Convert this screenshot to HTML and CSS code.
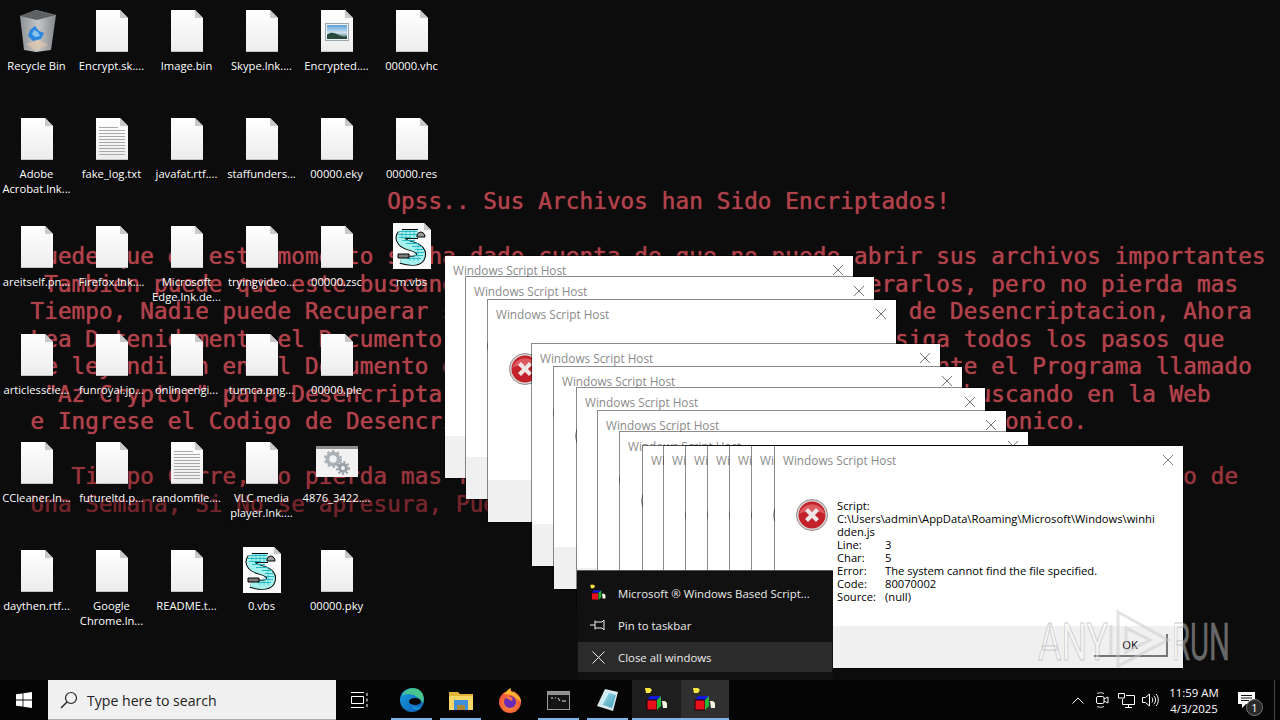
FILE: index.html
```html
<!DOCTYPE html>
<html lang="es">
<head>
  <meta charset="UTF-8" />
  <title>Desktop</title>
  <link rel="stylesheet" href="styles.css">
</head>
<body>
  <svg class="defs" width="0" height="0">
    <defs>
      <linearGradient id="paper" x1="0" y1="0" x2="0" y2="1"><stop offset="0" stop-color="#ffffff"/><stop offset="1" stop-color="#ececec"/></linearGradient>
      <linearGradient id="binfill" x1="0" y1="0" x2="1" y2="0"><stop offset="0" stop-color="#8d9296"/><stop offset=".5" stop-color="#c4c6c8"/><stop offset="1" stop-color="#84878a"/></linearGradient>
      <linearGradient id="sky" x1="0" y1="0" x2="0" y2="1"><stop offset="0" stop-color="#5aa0d8"/><stop offset=".55" stop-color="#cfe2ee"/><stop offset="1" stop-color="#2c5c50"/></linearGradient>
      <linearGradient id="edgefill" x1="0" y1="0" x2="1" y2="1"><stop offset="0" stop-color="#1b9de2"/><stop offset="1" stop-color="#0b5fb4"/></linearGradient>
      <linearGradient id="padfill" x1="0" y1="0" x2="1" y2="1"><stop offset="0" stop-color="#a8e0ee"/><stop offset="1" stop-color="#3f9db8"/></linearGradient>
      <radialGradient id="foxfill" cx=".5" cy=".6" r=".6"><stop offset="0" stop-color="#ff9a2e"/><stop offset="1" stop-color="#f0483e"/></radialGradient>
      <symbol id="doc" viewBox="0 0 32 42">
        <path d="M0 0H24L32 8V42H0Z" fill="url(#paper)"/>
        <path d="M24 0V8H32Z" fill="#c9c9c9"/>
        <path d="M0 41.5H32" stroke="#c4c4c4"/>
      </symbol>
      <symbol id="txt" viewBox="0 0 32 42">
        <use href="#doc" width="32" height="42"/>
        <path d="M3 9.5H22M3 12.5H29M3 15.5H29M3 18.5H29M3 21.5H29M3 24.5H29M3 27.5H29M3 30.5H29M3 33.5H29M3 36.5H29" stroke="#a9a9a9"/>
      </symbol>
      <symbol id="picdoc" viewBox="0 0 32 42">
        <use href="#doc" width="32" height="42"/>
        <rect x="4.5" y="13.5" width="23" height="17" fill="#eef1f3" stroke="#9aa6ad"/>
        <rect x="6" y="15" width="20" height="14" fill="url(#sky)"/>
        <path d="M6 25C10 21 14 23 18 25S24 27 26 26V29H6Z" fill="#27493f"/>
      </symbol>
      <symbol id="vbs" viewBox="0 0 38 46">
        <path d="M0 0H31L38 7V46H0Z" fill="#fbfbfb"/>
        <path d="M31 0V7H38Z" fill="#c8c8c8"/>
        <path d="M9 11H25M9 11C5 17 10 21 18 23C26 25 30 29 27 35C24 39 15 38 8 36" fill="none" stroke="#000" stroke-width="10"/>
        <path d="M9 11H25M9 11C5 17 10 21 18 23C26 25 30 29 27 35C24 39 15 38 8 36" fill="none" stroke="#a6f0ee" stroke-width="8"/>
        <path d="M6 8.5H24M5 11.5H24M6 14.5H18M9 17.5H22M13 20.5H26M19 23.5H29M22 26.5H31M23 29.5H31M22 32.5H30M14 35.5H28" stroke="#19b4bc" stroke-width=".9"/>
        <path d="M9 7V15M13 7V17M17 7V19M21 7V21M25 20V38M21 30V38M17 33V38" stroke="#19b4bc" stroke-width=".6"/>
        <path d="M24 12C26 7 32 9 32 14H24Z" fill="#9b9b9b" stroke="#000"/>
        <path d="M5 31H16V35H5Z" fill="#7d7d7d" stroke="#000"/>
      </symbol>
      <symbol id="err" viewBox="0 0 32 32">
        <circle cx="16" cy="16" r="15.5" fill="#d8d8d8" stroke="#9c8a8a"/>
        <circle cx="16" cy="16" r="13.5" fill="#c4222a"/>
        <path d="M3 15A13.5 13.5 0 0 1 29 15C22 11 10 11 3 15Z" fill="#dd5a5f"/>
        <path d="M10.5 10.5L21.5 21.5M21.5 10.5L10.5 21.5" stroke="#efe6e6" stroke-width="4.2"/>
      </symbol>
      <symbol id="x" viewBox="0 0 12 12">
        <path d="M1 1L11 11M11 1L1 11" stroke="#777" fill="none"/>
      </symbol>
      <symbol id="wsh" viewBox="0 0 24 26">
        <path d="M0 1H5L7 3L5 6H1Z" fill="#ffe83a"/>
        <path d="M2 13L5 9H16L12 13Z" fill="#1418d8"/>
        <rect x="2" y="13" width="10" height="10" fill="#e8101c" stroke="#200"/>
        <path d="M12 13L16 9V19L12 23Z" fill="#22b838"/>
        <path d="M17 14H20L22 16V21H18Z" fill="#f4f4e4"/>
      </symbol>
    </defs>
  </svg>

  <pre class="wallpaper"><span class="bright">                            Opss.. Sus Archivos han Sido Encriptados!

  Puede que en este momento se ha dado cuenta de que no puede abrir sus archivos importantes
   Tambien puede que este buscando la mejor forma de como Recuperarlos, pero no pierda mas
  Tiempo, Nadie puede Recuperar sus Archivos sin nuestro Servicio de Desencriptacion, Ahora
  Lea Detenidamente el Documento que le Dejamos en su Escritorio siga todos los pasos que
   e leyendiron en el Documento de Rescate, y Luego Baje Inmediatamente el Programa llamado
   "Az Cryptor" para Desencriptar sus Archivos, Tambien Puede Hacerlo buscando en la Web
  e Ingrese el Codigo de Desencriptacion que le Daremos por Correo Electronico.
</span><span class="mid">
     Tiempo Corre, No pierda mas Tiempo, Su Codigo de Desencriptacion Vence en el Plazo de
</span><span class="dim">  Una Semana, Si No se apresura, Puede Perder Todos sus Archivos</span></pre>

  <main class="icons">
    <div class="item">
      <svg class="thumb" width="38" height="42" viewBox="0 0 38 42">
        <path d="M2 6L18 0L38 5L33 40L18 42L6 40Z" fill="url(#binfill)"/>
        <path d="M2 6L18 0L38 5L19 10Z" fill="#5e6164"/>
        <path d="M12 20L17 16L21 21L26 23L23 29L15 31L10 26Z" fill="#2a86de"/>
        <path d="M16 20L20 22L22 26L17 27L14 24Z" fill="#8cc4f0"/>
        <path d="M8 34L20 30L30 35L18 41Z" fill="#e8c8a8" opacity=".6"/>
      </svg>
      <span>Recycle Bin</span>
    </div>
    <div class="item"><svg class="thumb doc"><use href="#doc"/></svg><span>Encrypt.sk....</span></div>
    <div class="item"><svg class="thumb doc"><use href="#doc"/></svg><span>Image.bin</span></div>
    <div class="item"><svg class="thumb doc"><use href="#doc"/></svg><span>Skype.lnk....</span></div>
    <div class="item"><svg class="thumb doc"><use href="#picdoc"/></svg><span>Encrypted....</span></div>
    <div class="item"><svg class="thumb doc"><use href="#doc"/></svg><span>00000.vhc</span></div>

    <div class="item"><svg class="thumb doc"><use href="#doc"/></svg><span>Adobe<br>Acrobat.lnk...</span></div>
    <div class="item"><svg class="thumb doc"><use href="#txt"/></svg><span>fake_log.txt</span></div>
    <div class="item"><svg class="thumb doc"><use href="#doc"/></svg><span>javafat.rtf....</span></div>
    <div class="item"><svg class="thumb doc"><use href="#doc"/></svg><span>staffunders...</span></div>
    <div class="item"><svg class="thumb doc"><use href="#doc"/></svg><span>00000.eky</span></div>
    <div class="item"><svg class="thumb doc"><use href="#doc"/></svg><span>00000.res</span></div>

    <div class="item"><svg class="thumb doc"><use href="#doc"/></svg><span>areitself.pn...</span></div>
    <div class="item"><svg class="thumb doc"><use href="#doc"/></svg><span>Firefox.lnk....</span></div>
    <div class="item"><svg class="thumb doc"><use href="#doc"/></svg><span>Microsoft<br>Edge.lnk.de...</span></div>
    <div class="item"><svg class="thumb doc"><use href="#doc"/></svg><span>tryingvideo...</span></div>
    <div class="item"><svg class="thumb doc"><use href="#doc"/></svg><span>00000.zsc</span></div>
    <div class="item"><svg class="thumb script"><use href="#vbs"/></svg><span>m.vbs</span></div>

    <div class="item"><svg class="thumb doc"><use href="#doc"/></svg><span>articlesscie...</span></div>
    <div class="item"><svg class="thumb doc"><use href="#doc"/></svg><span>funroyal.jp...</span></div>
    <div class="item"><svg class="thumb doc"><use href="#doc"/></svg><span>onlineengi...</span></div>
    <div class="item"><svg class="thumb doc"><use href="#doc"/></svg><span>turnca.png...</span></div>
    <div class="item"><svg class="thumb doc"><use href="#doc"/></svg><span>00000.ple</span></div>
    <div class="item"></div>

    <div class="item"><svg class="thumb doc"><use href="#doc"/></svg><span>CCleaner.ln...</span></div>
    <div class="item"><svg class="thumb doc"><use href="#doc"/></svg><span>futureltd.p...</span></div>
    <div class="item"><svg class="thumb doc"><use href="#txt"/></svg><span>randomfile....</span></div>
    <div class="item"><svg class="thumb doc"><use href="#doc"/></svg><span>VLC media<br>player.lnk....</span></div>
    <div class="item">
      <svg class="thumb gears" width="42" height="31" viewBox="0 0 42 31">
        <rect width="42" height="31" fill="#f2f2f2"/>
        <rect width="42" height="3" fill="#8d8d8d"/>
        <circle cx="17" cy="13" r="5.5" fill="none" stroke="#a9b0b6" stroke-width="3.5"/>
        <circle cx="17" cy="13" r="8" fill="none" stroke="#a9b0b6" stroke-width="2" stroke-dasharray="2.6 2.6"/>
        <circle cx="27" cy="22" r="3.5" fill="none" stroke="#98a0a6" stroke-width="3"/>
        <circle cx="27" cy="22" r="6" fill="none" stroke="#98a0a6" stroke-width="2" stroke-dasharray="2 2"/>
      </svg>
      <span>4876_3422....</span>
    </div>
    <div class="item"></div>

    <div class="item"><svg class="thumb doc"><use href="#doc"/></svg><span>daythen.rtf...</span></div>
    <div class="item"><svg class="thumb doc"><use href="#doc"/></svg><span>Google<br>Chrome.ln...</span></div>
    <div class="item"><svg class="thumb doc"><use href="#doc"/></svg><span>README.t...</span></div>
    <div class="item"><svg class="thumb script"><use href="#vbs"/></svg><span>0.vbs</span></div>
    <div class="item"><svg class="thumb doc"><use href="#doc"/></svg><span>00000.pky</span></div>
  </main>

  <section class="dialog w1"><div class="title">Windows Script Host<svg class="close"><use href="#x"/></svg></div><div class="body"><svg class="erricon"><use href="#err"/></svg></div><div class="foot"></div></section>
  <section class="dialog w2"><div class="title">Windows Script Host<svg class="close"><use href="#x"/></svg></div><div class="body"><svg class="erricon"><use href="#err"/></svg></div><div class="foot"></div></section>
  <section class="dialog w3"><div class="title">Windows Script Host<svg class="close"><use href="#x"/></svg></div><div class="body"><svg class="erricon"><use href="#err"/></svg></div><div class="foot"></div></section>
  <section class="dialog w4"><div class="title">Windows Script Host<svg class="close"><use href="#x"/></svg></div><div class="body"><svg class="erricon"><use href="#err"/></svg></div><div class="foot"></div></section>
  <section class="dialog w5"><div class="title">Windows Script Host<svg class="close"><use href="#x"/></svg></div><div class="body"><svg class="erricon"><use href="#err"/></svg></div><div class="foot"></div></section>
  <section class="dialog w6"><div class="title">Windows Script Host<svg class="close"><use href="#x"/></svg></div><div class="body"><svg class="erricon"><use href="#err"/></svg></div><div class="foot"></div></section>
  <section class="dialog w7"><div class="title">Windows Script Host<svg class="close"><use href="#x"/></svg></div><div class="body"><svg class="erricon"><use href="#err"/></svg></div><div class="foot"></div></section>
  <section class="dialog w8"><div class="title">Windows Script Host<svg class="close"><use href="#x"/></svg></div><div class="body"><svg class="erricon"><use href="#err"/></svg></div><div class="foot"></div></section>
  <section class="dialog w9"><div class="title">Windows Script Host</div><div class="body"><svg class="erricon"><use href="#err"/></svg></div><div class="foot"></div></section>
  <section class="dialog w10"><div class="title">Windows Script Host</div><div class="body"><svg class="erricon"><use href="#err"/></svg></div><div class="foot"></div></section>
  <section class="dialog w11"><div class="title">Windows Script Host</div><div class="body"><svg class="erricon"><use href="#err"/></svg></div><div class="foot"></div></section>
  <section class="dialog w12"><div class="title">Windows Script Host</div><div class="body"><svg class="erricon"><use href="#err"/></svg></div><div class="foot"></div></section>
  <section class="dialog w13"><div class="title">Windows Script Host</div><div class="body"><svg class="erricon"><use href="#err"/></svg></div><div class="foot"></div></section>
  <section class="dialog w14"><div class="title">Windows Script Host</div><div class="body"><svg class="erricon"><use href="#err"/></svg></div><div class="foot"></div></section>

  <section class="dialog main-dialog">
    <div class="title">Windows Script Host<svg class="close"><use href="#x"/></svg></div>
    <div class="body">
      <svg class="erricon"><use href="#err"/></svg>
      <div class="message">
        <div class="wide">Script:</div>
        <div class="wide">C:\Users\admin\AppData\Roaming\Microsoft\Windows\winhi<br>dden.js</div>
        <div>Line:</div><div>3</div>
        <div>Char:</div><div>5</div>
        <div>Error:</div><div>The system cannot find the file specified.</div>
        <div>Code:</div><div>80070002</div>
        <div>Source:</div><div>(null)</div>
      </div>
    </div>
    <div class="foot"><button class="ok">OK</button></div>
  </section>

  <nav class="jumplist">
    <div class="jump"><svg class="jump-icon" width="16" height="18" viewBox="0 0 24 26"><use href="#wsh" width="24" height="26"/></svg>Microsoft ® Windows Based Script...</div>
    <div class="jump"><svg class="jump-icon" width="17" height="12" viewBox="0 0 17 12"><path d="M0 6H5M5 1.5V10.5M5 3H12L14 1V11L12 9H5" fill="none" stroke="#eee"/></svg>Pin to taskbar</div>
    <div class="jump hover"><svg class="jump-icon" width="13" height="13" viewBox="0 0 13 13"><path d="M.5 .5L12.5 12.5M12.5 .5L.5 12.5" stroke="#eee" fill="none"/></svg>Close all windows</div>
  </nav>

  <svg class="watermark" width="210" height="64" viewBox="0 0 210 64">
    <text x="0" y="52" class="wm" textLength="70" lengthAdjust="spacingAndGlyphs">ANY</text>
    <path d="M73 17V47M80 4V58L130 32Z M88 20V44L112 32Z" class="wm-play"/>
    <text x="134" y="52" class="wm" textLength="58" lengthAdjust="spacingAndGlyphs">RUN</text>
  </svg>

  <footer class="taskbar">
    <div class="start">
      <svg width="16" height="16" viewBox="0 0 16 16"><path d="M0 2.3L6.6 1.4V7.6H0ZM7.4 1.3L16 0V7.6H7.4ZM0 8.4H6.6V14.6L0 13.7ZM7.4 8.4H16V16L7.4 14.7Z" fill="#fff"/></svg>
    </div>
    <div class="search">
      <svg width="18" height="18" viewBox="0 0 18 18"><circle cx="11" cy="7" r="5.5" fill="none" stroke="#222" stroke-width="1.2"/><path d="M7 11L1 17" stroke="#222" stroke-width="1.4"/></svg>
      <span>Type here to search</span>
    </div>
    <div class="task wide-task">
      <svg width="18" height="16" viewBox="0 0 18 16"><path d="M0 .5H13M0 15.5H13M.5 4.5H12.5V11.5H.5ZM16 1V4M16 6.5V9.5M16 12V15" stroke="#fff" fill="none"/></svg>
    </div>
    <div class="task open">
      <svg width="24" height="24" viewBox="0 0 24 24">
        <circle cx="12" cy="12" r="12" fill="url(#edgefill)"/>
        <path d="M2 8C4 1 12-1 18 1C23 4 25 10 23 15C20 10 14 6 8 6C5 6 3 7 2 8Z" fill="#47c58f"/>
        <ellipse cx="15" cy="13.5" rx="6" ry="3.6" fill="#050505"/>
        <path d="M12 16C14 20 18 20 21 18L19 22L13 21Z" fill="#1c8fd6"/>
      </svg>
    </div>
    <div class="task open">
      <svg width="24" height="19" viewBox="0 0 24 19">
        <path d="M0 1H9L11 3H24V6H0Z" fill="#e2b43a"/>
        <rect y="5" width="24" height="14" fill="#f7d768"/>
        <path d="M5 9H19V19H16V14H8V19H5Z" fill="#3f8fdc"/>
        <rect x="8" y="14" width="8" height="5" fill="#a88a3a"/>
      </svg>
    </div>
    <div class="task">
      <svg width="24" height="25" viewBox="0 0 24 25">
        <circle cx="12" cy="14" r="11" fill="url(#foxfill)"/>
        <path d="M4 6C8 6 8 2 13 0C12 3 14 5 16 4C17 6 23 8 23 14L14 7Z" fill="#ffb52e"/>
        <circle cx="12" cy="14" r="6" fill="#6b2bb5"/>
        <path d="M8 9C12 7 16 10 14 13C12 11 9 12 8 9Z" fill="#ff7a3a"/>
      </svg>
    </div>
    <div class="task open">
      <svg width="23" height="19" viewBox="0 0 23 19">
        <rect x=".5" y=".5" width="22" height="18" fill="#141414" stroke="#9b9b9b"/>
        <rect x="1" y="1" width="21" height="3" fill="#8f8f8f"/>
        <path d="M4 7H6M8 7H9M11 7L13 10M15 10H19" stroke="#e4e4e4"/>
      </svg>
    </div>
    <div class="task open">
      <svg width="24" height="24" viewBox="0 0 24 24">
        <path d="M9 1L22 4L17 23L1 18Z" fill="#dbeaf0"/>
        <path d="M9.5 4L20 7L16 20L4 16Z" fill="url(#padfill)"/>
        <path d="M9.5 4L13 5L6.5 17L4 16Z" fill="#cfeef5"/>
      </svg>
    </div>
    <div class="task open active"><svg width="24" height="26"><use href="#wsh"/></svg></div>
    <div class="task open active last"><svg width="24" height="26"><use href="#wsh"/></svg></div>

    <div class="tray">
      <div class="tray-icon"><svg width="12" height="7" viewBox="0 0 12 7"><path d="M.5 6.5L6 1L11.5 6.5" fill="none" stroke="#fff"/></svg></div>
      <div class="tray-icon"><svg width="14" height="16" viewBox="0 0 14 16"><path d="M2 1.5C4 .5 7 .5 9 1.5M2 14.5C4 15.5 7 15.5 9 14.5" stroke="#ddd" fill="none"/><rect x="1.5" y="4.5" width="7.5" height="7" rx="1.5" fill="none" stroke="#fff"/><path d="M9 7L13 5V11L9 9" fill="none" stroke="#fff"/></svg></div>
      <div class="tray-icon"><svg width="17" height="15" viewBox="0 0 17 15"><path d="M.5 .5H6.5V5H.5ZM8 2.5H16.5V11.5H4.5V6M10.5 11.5V14.5M7 14.5H14" fill="none" stroke="#fff"/></svg></div>
      <div class="tray-icon"><svg width="17" height="14" viewBox="0 0 17 14"><path d="M.5 4.5H3.5L7.5 1V13L3.5 9.5H.5Z M10 4.5C11 6 11 8 10 9.5M12 3C14 5 14 9 12 11M14 1C17 4 17 10 14 13" fill="none" stroke="#fff"/></svg></div>
      <div class="clock"><div>11:59 AM</div><div>4/3/2025</div></div>
      <div class="notify">
        <svg width="17" height="17" viewBox="0 0 17 17"><path d="M0 0H17V12H8L4 16V12H0Z" fill="#fff"/><path d="M3 3.5H14M3 6H14M3 8.5H11" stroke="#111"/></svg>
        <span class="badge">1</span>
      </div>
      <div class="peek"></div>
    </div>
  </footer>
</body>
</html>
```

FILE: styles.css
```css
body {
  margin: 0;
  width: 1280px;
  height: 720px;
  position: relative;
  overflow: hidden;
  background: #0c0c0c;
  font-family: 'Open Sans', sans-serif;
  font-size: 11.2px;
}

.defs {
  position: absolute;
}

/* wallpaper note */
.wallpaper {
  position: absolute;
  top: 188px;
  left: 3px;
  margin: 0;
  font-family: 'DejaVu Sans Mono', monospace;
  font-size: 22.8px;
  line-height: 27.5px;
  white-space: pre;
}

.bright {
  color: #b2424a;
  text-shadow: 0 0 1px #b2424a;
}

.mid {
  color: #98343b;
  text-shadow: 0 0 1px #98343b;
}

.dim {
  color: #74252b;
  text-shadow: 0 0 1px #74252b;
}

/* desktop icons */
.icons {
  position: absolute;
  top: 10px;
  left: -1px;
  display: grid;
  grid-template-columns: repeat(6, 75px);
  grid-auto-rows: 108px;
}

.item {
  display: flex;
  flex-direction: column;
  align-items: center;
  color: #fff;
  line-height: 15px;
  text-align: center;
  white-space: nowrap;
  text-shadow: 0 1px 2px rgba(0,0,0,0.8);
}

.thumb {
  display: block;
  margin-bottom: 6px;
  flex: none;
}

.doc {
  width: 32px;
  height: 42px;
}

.script {
  width: 38px;
  height: 46px;
  margin-top: -3px;
  margin-bottom: 5px;
}

.gears {
  margin-top: 4px;
  margin-bottom: 13px;
}

/* stacked message boxes */
.dialog {
  position: absolute;
  width: 410px;
  height: 224px;
  box-sizing: border-box;
  display: flex;
  flex-direction: column;
  background: #fff;
  background-clip: padding-box;
  border: 1px solid rgba(0,0,0,0.45);
  color: #000;
}

.w1 { left: 444px; top: 255px; }
.w2 { left: 465px; top: 276px; }
.w3 { left: 487px; top: 299px; }
.w4 { left: 531px; top: 343px; }
.w5 { left: 553px; top: 366px; }
.w6 { left: 576px; top: 387px; }
.w7 { left: 597px; top: 410px; }
.w8 { left: 619px; top: 431px; }
.w9 { left: 642px; top: 445px; }
.w10 { left: 663px; top: 445px; }
.w11 { left: 685px; top: 445px; }
.w12 { left: 707px; top: 445px; }
.w13 { left: 729px; top: 445px; }
.w14 { left: 751px; top: 445px; }
.main-dialog { left: 774px; top: 445px; }

.title {
  height: 28px;
  flex: none;
  display: flex;
  align-items: center;
  justify-content: space-between;
  padding: 0 9px 0 8px;
  color: #8a8a8a;
  font-size: 11.8px;
  white-space: nowrap;
}

.close {
  width: 12px;
  height: 12px;
}

.body {
  flex: 1;
  display: flex;
  padding: 25px 0 0 21px;
  gap: 9px;
}

.erricon {
  width: 32px;
  height: 32px;
  flex: none;
}

.message {
  display: grid;
  grid-template-columns: 48px 1fr;
  grid-auto-rows: min-content;
  line-height: 13px;
  white-space: nowrap;
}

.wide {
  grid-column: 1 / 3;
}

.foot {
  flex: none;
  height: 42px;
  background: #f0f0f0;
  display: flex;
  justify-content: flex-end;
  padding: 8px 15px 0 0;
  box-sizing: border-box;
}

.ok {
  width: 74px;
  height: 23px;
  padding: 0;
  background: #f0f0f0;
  border: 0;
  border-right: 2px solid #777;
  border-bottom: 2px solid #777;
  font-family: inherit;
  font-size: 11.2px;
  color: #000;
}

/* taskbar context menu */
.jumplist {
  position: absolute;
  left: 577px;
  top: 570px;
  width: 256px;
  height: 110px;
  box-sizing: border-box;
  padding: 7px 1px;
  display: flex;
  flex-direction: column;
  gap: 2px;
  background: #111;
  border-top: 1px solid #555;
  color: #ececec;
  font-size: 11.4px;
}

.jump {
  height: 30px;
  flex: none;
  display: flex;
  align-items: center;
  padding-left: 12px;
  gap: 11px;
  white-space: nowrap;
}

.jump-icon {
  width: 17px;
  flex: none;
}

.jump.hover {
  background: #2b2b2b;
}

.watermark {
  position: absolute;
  left: 1038px;
  top: 608px;
}

.wm {
  font-family: 'Roboto', sans-serif;
  font-weight: 400;
  font-size: 52px;
  fill: rgba(255,255,255,0.38);
  stroke: rgba(130,130,130,0.4);
  stroke-width: 1px;
}

.wm-play {
  fill: none;
  stroke: rgba(200,200,200,0.5);
  stroke-width: 3px;
}

/* taskbar */
.taskbar {
  position: absolute;
  left: 0;
  right: 0;
  bottom: 0;
  height: 40px;
  display: flex;
  background: #050505;
}

.start {
  width: 48px;
  display: flex;
  align-items: center;
  justify-content: center;
}

.search {
  width: 288px;
  box-sizing: border-box;
  display: flex;
  align-items: center;
  gap: 9px;
  padding: 1px 0 0 12px;
  background: #f0f0f0;
  border-bottom: 1px solid #aaa;
  color: #222;
  font-size: 14.1px;
}

.task {
  width: 49px;
  flex: none;
  position: relative;
  display: flex;
  align-items: center;
  justify-content: center;
}

.wide-task {
  width: 48px;
  margin-right: 3px;
}

.task.open::after {
  content: '';
  position: absolute;
  left: 4px;
  right: 4px;
  bottom: 0;
  height: 2px;
  background: #7fb2e6;
}

.task.active {
  background: #1e1e1e;
}

.task.active::after {
  left: 0;
  right: 0;
}

.task.last {
  width: 48px;
  background: #303030;
}

.tray {
  margin-left: auto;
  display: flex;
  align-items: center;
  height: 100%;
  color: #fff;
}

.tray-icon {
  width: 24px;
  display: flex;
  justify-content: center;
}

.clock {
  width: 64px;
  padding-top: 2px;
  text-align: center;
  font-size: 11.4px;
  line-height: 16px;
}

.notify {
  width: 40px;
  height: 100%;
  position: relative;
  display: flex;
  align-items: center;
  justify-content: center;
}

.badge {
  position: absolute;
  left: 20px;
  top: 19px;
  width: 15px;
  height: 15px;
  border-radius: 50%;
  background: #2a2a2a;
  border: 1px solid #777;
  font-size: 11px;
  line-height: 15px;
  text-align: center;
}

.peek {
  width: 5px;
  height: 100%;
  margin-left: 8px;
  border-left: 1px solid #444;
}
```
